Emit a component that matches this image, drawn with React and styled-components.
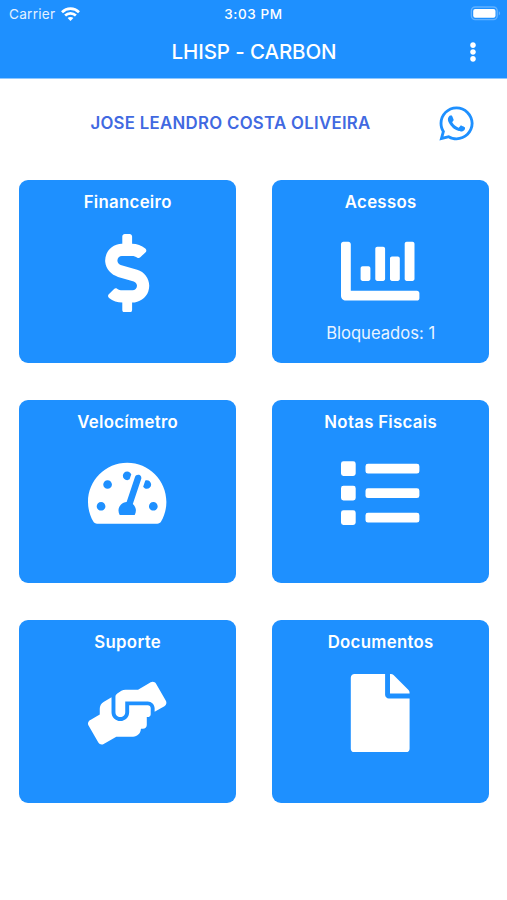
import React from "react";
import styled, { createGlobalStyle } from "styled-components";
import {
  FaChartBar,
  FaDollarSign,
  FaEllipsisV,
  FaFile,
  FaHandsHelping,
  FaList,
  FaTachometerAlt,
  FaWhatsapp,
} from "react-icons/fa";

const GlobalStyle = createGlobalStyle`
  * { box-sizing: border-box; }
  body { margin: 0; background: #fff; }
`;

const Screen = styled.main`
  width: 507px;
  height: 900px;
  overflow: hidden;
  background: #fff;
  font-family: Inter, "Liberation Sans", sans-serif;
`;

const Header = styled.header`
  height: 79px;
  border-bottom: 1px solid #8fc8ff;
  background: #1e90ff;
  color: #fff;
`;

const StatusBar = styled.div`
  display: grid;
  grid-template-columns: 1fr auto 1fr;
  align-items: center;
  height: 26px;
  padding: 1px 6px 0 9px;
  font-size: 13.6px;
  line-height: 26px;
`;

const Carrier = styled.div`
  display: flex;
  align-items: center;
  gap: 6px;
  letter-spacing: 0.25px;
`;

const CarrierName = styled.span`
  opacity: 0.88;
`;

const Clock = styled.time`
  margin-right: 3px;
  font-size: 13.5px;
  font-weight: 500;
  letter-spacing: 0.6px;
`;

const BatteryIcon = styled.svg`
  justify-self: end;
  margin-bottom: 2px;
`;

const TitleBar = styled.div`
  display: grid;
  grid-template-columns: 67px 1fr 67px;
  align-items: center;
  height: 52px;
`;

const Title = styled.h1`
  grid-column: 2;
  margin: 0 0 0 1px;
  text-align: center;
  font-size: 20.5px;
  font-weight: 500;
  line-height: 28px;
  letter-spacing: -0.1px;
`;

const IconButton = styled.button`
  display: flex;
  align-items: center;
  justify-content: center;
  padding: 0 2px 0 0;
  border: 0;
  background: none;
  color: ${({ $color }) => $color};
`;

const CustomerRow = styled.section`
  display: grid;
  grid-template-columns: 54px 1fr 100px;
  align-items: center;
  height: 88px;
`;

const CustomerName = styled.h2`
  grid-column: 2;
  margin: 0;
  text-align: center;
  color: #4169e1;
  font-size: 16.8px;
  font-weight: 600;
  letter-spacing: 0.3px;
  white-space: nowrap;
`;

const CardGrid = styled.section`
  display: grid;
  grid-template-columns: 216.5px 216.5px;
  grid-auto-rows: 183px;
  gap: 37px 36.5px;
  padding: 13px 0 0 19.4px;
`;

const Card = styled.article`
  display: flex;
  flex-direction: column;
  align-items: center;
  padding-top: 11px;
  border-radius: 9px;
  background: #1e90ff;
  color: #fff;
`;

const CardTitle = styled.h3`
  margin: 0 0 ${({ $gap }) => $gap}px;
  font-size: 16.8px;
  font-weight: 600;
  line-height: 23px;
  letter-spacing: 0.3px;
`;

const CardNote = styled.p`
  margin: 12px 0 0;
  font-size: 16.6px;
  line-height: 22px;
  opacity: 0.9;
`;

const cards = [
  { title: "Financeiro", Icon: FaDollarSign },
  { title: "Acessos", Icon: FaChartBar, note: "Bloqueados: 1" },
  { title: "Velocímetro", Icon: FaTachometerAlt },
  { title: "Notas Fiscais", Icon: FaList },
  { title: "Suporte", Icon: FaHandsHelping },
  { title: "Documentos", Icon: FaFile },
];

function Wifi() {
  return (
    <svg width="19" height="14" viewBox="0 0 19 14" fill="none" stroke="#fff" strokeWidth="2.7">
      <path d="M1 5.2C5.8.5 13.2.5 18 5.2" />
      <path d="M4.1 8.6c3.1-2.9 7.7-2.9 10.8 0" />
      <path d="M9.5 14 6.6 11.1c1.5-1.4 4.3-1.4 5.8 0z" fill="#fff" stroke="none" />
    </svg>
  );
}

function Battery() {
  return (
    <BatteryIcon width="31" height="15" viewBox="0 0 31 15">
      <rect x="1.4" y="1" width="25.8" height="12.6" rx="3.8" fill="none" stroke="#61b1ff" strokeWidth="1.4" />
      <rect x="3.2" y="2.9" width="22.3" height="8.8" rx="2" fill="#fff" />
      <path d="M28.8 5.2c1.8.7 1.8 3.5 0 4.2z" fill="#61b1ff" />
    </BatteryIcon>
  );
}

export default function App() {
  return (
    <Screen>
      <GlobalStyle />
      <Header>
        <StatusBar>
          <Carrier>
            <CarrierName>Carrier</CarrierName>
            <Wifi />
          </Carrier>
          <Clock>3:03 PM</Clock>
          <Battery />
        </StatusBar>
        <TitleBar>
          <Title>LHISP - CARBON</Title>
          <IconButton $color="#fff" aria-label="Menu">
            <FaEllipsisV size={20} />
          </IconButton>
        </TitleBar>
      </Header>
      <CustomerRow>
        <CustomerName>JOSE LEANDRO COSTA OLIVEIRA</CustomerName>
        <IconButton $color="#1e90ff" aria-label="WhatsApp">
          <FaWhatsapp size={39} />
        </IconButton>
      </CustomerRow>
      <CardGrid>
        {cards.map(({ title, Icon, note }) => (
          <Card key={title}>
            <CardTitle $gap={note ? 18 : 20}>{title}</CardTitle>
            <Icon size={78.4} />
            {note && <CardNote>{note}</CardNote>}
          </Card>
        ))}
      </CardGrid>
    </Screen>
  );
}
